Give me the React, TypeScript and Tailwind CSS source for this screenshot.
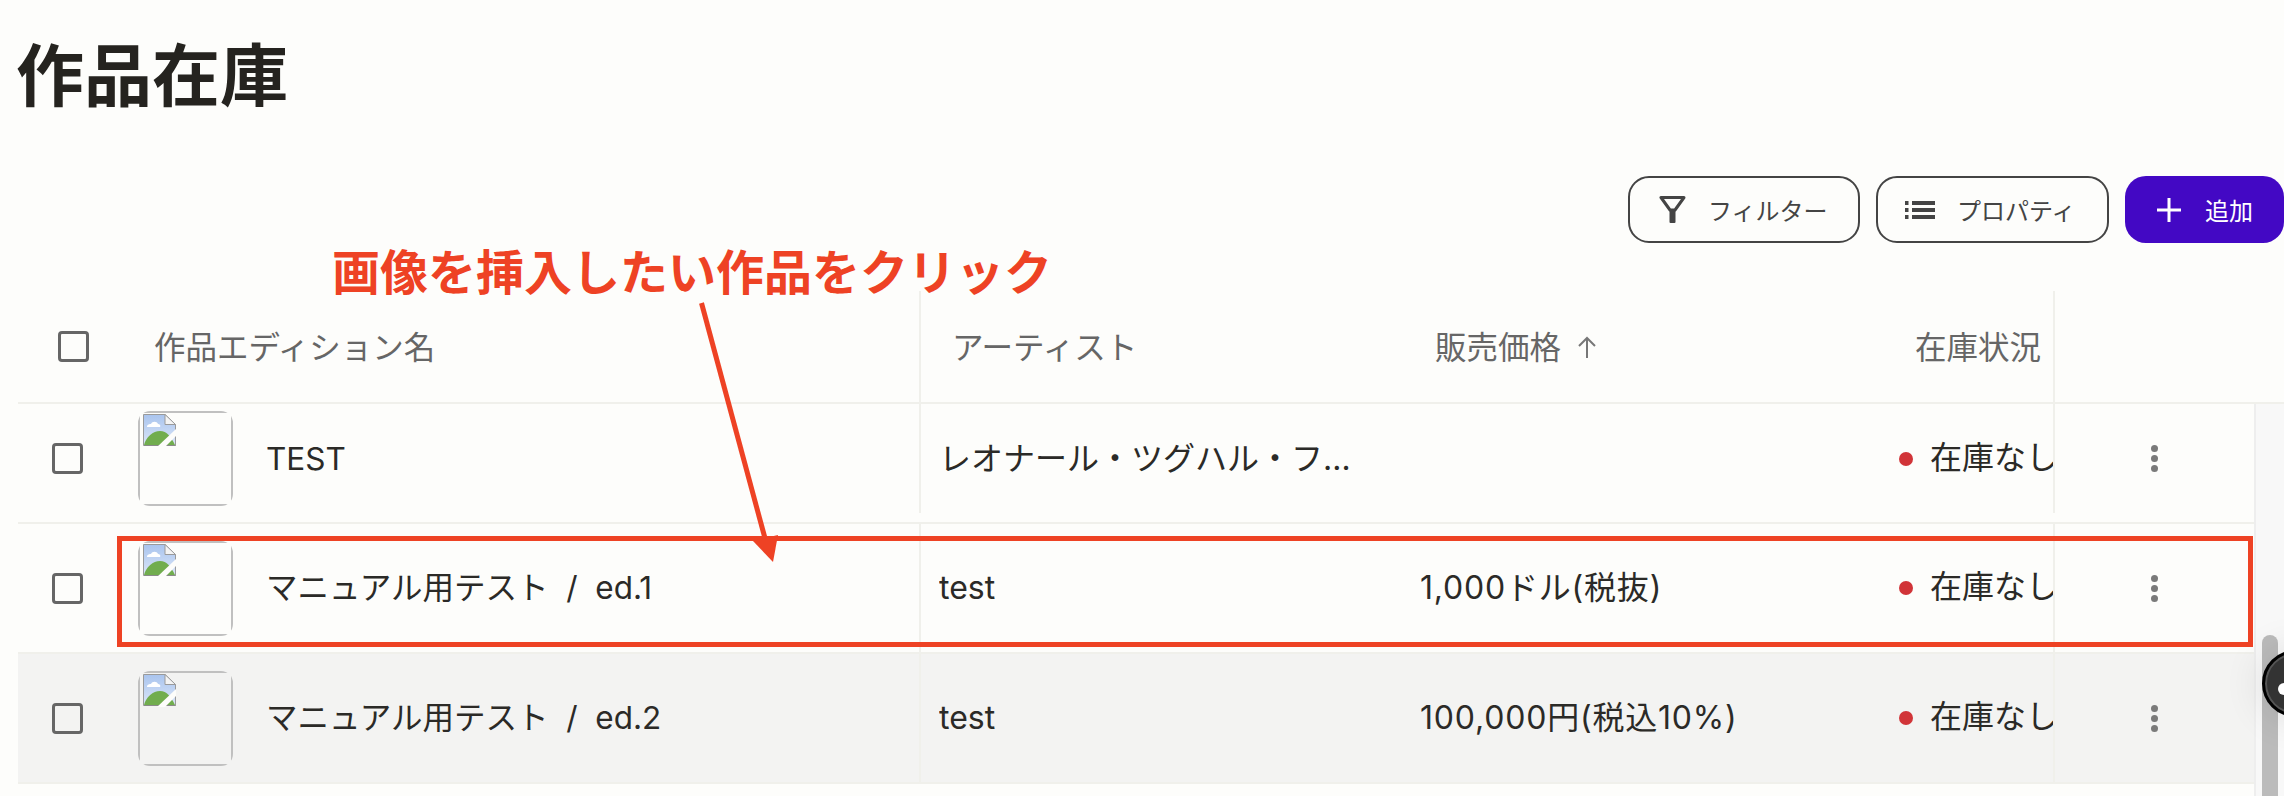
const JP = "font-['Noto_Sans_CJK_JP','Noto_Sans',sans-serif]";
const ROW_FONT = "font-['Inter','Noto_Sans_CJK_JP',sans-serif]";

function Checkbox() {
  return <div className="w-[31px] h-[31px] rounded-[4px] border-[3.5px] border-[#666666]" />;
}

function BrokenImage() {
  return (
    <div className="w-[95px] h-[95px] rounded-[12px] overflow-hidden shrink-0">
      <div className="w-full h-full border-2 border-[#c0c0c0] pl-[3px] pt-[1px]">
        <svg width="33" height="33" viewBox="0 0 33 33">
          <defs>
            <linearGradient id="sky" x1="0" y1="0" x2="0" y2="1">
              <stop offset="0" stopColor="#a9c4ee" />
              <stop offset="1" stopColor="#dbe6f8" />
            </linearGradient>
          </defs>
          <path d="M0.5 0.5H22L32.5 10.5V31.5H0.5Z" fill="url(#sky)" stroke="#9a9a9a" />
          <path d="M22 0.5V10.5H32.5Z" fill="#f4f4f4" stroke="#9a9a9a" />
          <path d="M4 13c0-3 3-3 4-3 1-3 6-3 7 0 2 0 3 2 2 3Z" fill="#ffffff" />
          <path d="M1 31c2-8 9-14 16-14s11 6 15 14Z" fill="#71ad4e" />
          <path d="M1 31.5H32.5" stroke="#8a8a8a" />
          <path d="M14 33L33 15V22L22 33Z" fill="#fdfdfb" />
        </svg>
      </div>
    </div>
  );
}

function Row({ name, artist, price, hover, first }: { name: string; artist: string; price: string; hover?: boolean; first?: boolean }) {
  return (
    <div className={`flex border-b-2 border-[#f0f0eb] ${first ? "h-[120px] pb-[9px]" : "h-[130px]"} ${hover ? "bg-[#f3f3f2]" : ""} ${ROW_FONT}`}>
      <div className="w-[901px] flex items-center shrink-0">
        <div className="w-[120px] pl-[34px] shrink-0"><Checkbox /></div>
        <BrokenImage />
        <div className="ml-[33px] text-[31.5px] text-[#2b2a27] whitespace-pre">{name}</div>
      </div>
      <div className="w-[500px] shrink-0 border-l-2 border-[#f0f0eb] flex items-center pl-[18px]">
        <div className="w-[420px] truncate text-[32px] text-[#2b2a27]">{artist}</div>
      </div>
      <div className="w-[480px] shrink-0 flex items-center pl-[1px]">
        <div className="text-[32px] tracking-[0.8px] text-[#2b2a27]">{price}</div>
      </div>
      <div className="w-[154px] shrink-0 flex items-center overflow-hidden">
        <div className="w-[14px] h-[14px] rounded-full bg-[#d13438] shrink-0" />
        <div className="ml-[17px] mb-[2px] text-[32px] text-[#2b2a27] whitespace-nowrap">在庫なし</div>
      </div>
      <div className="w-[201px] shrink-0 border-l-2 border-[#f0f0eb] flex flex-col items-center justify-center gap-[3px]">
        <div className="w-[7px] h-[7px] rounded-full bg-[#7a7a7a]" />
        <div className="w-[7px] h-[7px] rounded-full bg-[#7a7a7a]" />
        <div className="w-[7px] h-[7px] rounded-full bg-[#7a7a7a]" />
      </div>
    </div>
  );
}

export default function App() {
  return (
    <div className={`relative w-[2284px] h-[796px] overflow-hidden bg-[#fdfdfb] ${JP}`}>
      <h1 className="pl-[16px] pt-[26px] text-[68px] leading-[92px] font-bold text-[#25231f]">作品在庫</h1>

      <div className="flex justify-end gap-[16px] mt-[58px]">
        <button className="w-[232px] h-[67px] rounded-[21px] border-2 border-[#444444] flex items-center pl-[29px] gap-[22px] text-[24px] text-[#444444]">
          <svg width="27" height="27" viewBox="0 0 27 27" fill="none">
            <path d="M2 1.5H25L16 14H11Z" stroke="#444444" strokeWidth="3" strokeLinejoin="round" />
            <path d="M10.5 13H16.5V26A1 1 0 0 1 15.5 27H11.5A1 1 0 0 1 10.5 26Z" fill="#444444" />
          </svg>
          フィルター
        </button>
        <button className="w-[233px] h-[67px] rounded-[21px] border-2 border-[#444444] flex items-center pl-[27px] gap-[22px] text-[24px] text-[#444444]">
          <svg width="30" height="18" viewBox="0 0 30 18" fill="#444444">
            <rect x="0" y="0" width="3.5" height="4" /><rect x="0" y="7" width="3.5" height="4" /><rect x="0" y="14" width="3.5" height="4" />
            <rect x="7" y="0" width="23" height="4" /><rect x="7" y="7" width="23" height="4" /><rect x="7" y="14" width="23" height="4" />
          </svg>
          プロパティ
        </button>
        <button className="w-[159px] h-[67px] rounded-[21px] bg-[#4308c4] flex items-center pl-[32px] gap-[24px] text-[24px] text-white">
          <svg width="24" height="24" viewBox="0 0 24 24" stroke="#ffffff" strokeWidth="3"><path d="M12 0V24M0 12H24" /></svg>
          追加
        </button>
      </div>

      <div className="ml-[18px] mt-[48px]">
        <div className="flex h-[113px] border-b-2 border-[#f0f0eb] text-[31.5px] text-[#666666]">
          <div className="w-[901px] shrink-0 flex items-center">
            <div className="w-[136px] pl-[40px] shrink-0"><Checkbox /></div>
            <span className="mb-[2px]">作品エディション名</span>
          </div>
          <div className="w-[516px] shrink-0 border-l-2 border-[#f0f0eb] flex items-center pl-[31px]">
            <span className="mb-[2px]">アーティスト</span>
          </div>
          <div className="w-[480px] shrink-0 flex items-center gap-[16px]">
            <span className="mb-[2px]">販売価格</span>
            <svg width="20" height="22" viewBox="0 0 20 22" fill="none" stroke="#777777" strokeWidth="2"><path d="M10 22V2M2 10L10 2L18 10" /></svg>
          </div>
          <div className="w-[138px] shrink-0 flex items-center whitespace-nowrap">
            <span className="mb-[2px]">在庫状況</span>
          </div>
          <div className="w-[201px] shrink-0 border-l-2 border-[#f0f0eb]" />
        </div>
        <Row first name="TEST" artist="レオナール・ツグハル・フジタ(藤田嗣治)" price="" />
        <Row name="マニュアル用テスト  /  ed.1" artist="test" price="1,000ドル(税抜)" />
        <Row hover name="マニュアル用テスト  /  ed.2" artist="test" price="100,000円(税込10%)" />
      </div>

      {/* scrollbar */}
      <div className="absolute left-[2254px] top-[404px] w-[30px] h-[392px] bg-[#f8f8f8] border-l-2 border-[#eeeeee]">
        <div className="absolute left-[6px] top-[231px] w-[16px] h-[161px] rounded-t-full bg-[#bbbbbb]" />
      </div>
      <div className="absolute left-[2262px] top-[650px] w-[67px] h-[67px] rounded-full bg-[#333333] border-[3px] border-black shadow-[0_0_40px_rgba(0,0,0,0.12),inset_0_0_0_2px_#555555]">
        <div className="absolute left-[13px] top-[30px] w-[12px] h-[12px] rounded-full bg-white" />
      </div>

      {/* annotation */}
      <div className="absolute left-[117px] top-[536px] w-[2136px] h-[111px] border-[5px] border-[#ee4224]" />
      <div className="absolute left-[332px] top-[239px] text-[48px] leading-[60px] font-bold text-[#ee4224] whitespace-nowrap">画像を挿入したい作品をクリック</div>
      <svg className="absolute left-0 top-0" width="2284" height="796" fill="none">
        <path d="M701.5 303L766 542" stroke="#ee4224" strokeWidth="5" />
        <path d="M753 541L778 535L773 562Z" fill="#ee4224" />
      </svg>
    </div>
  );
}
